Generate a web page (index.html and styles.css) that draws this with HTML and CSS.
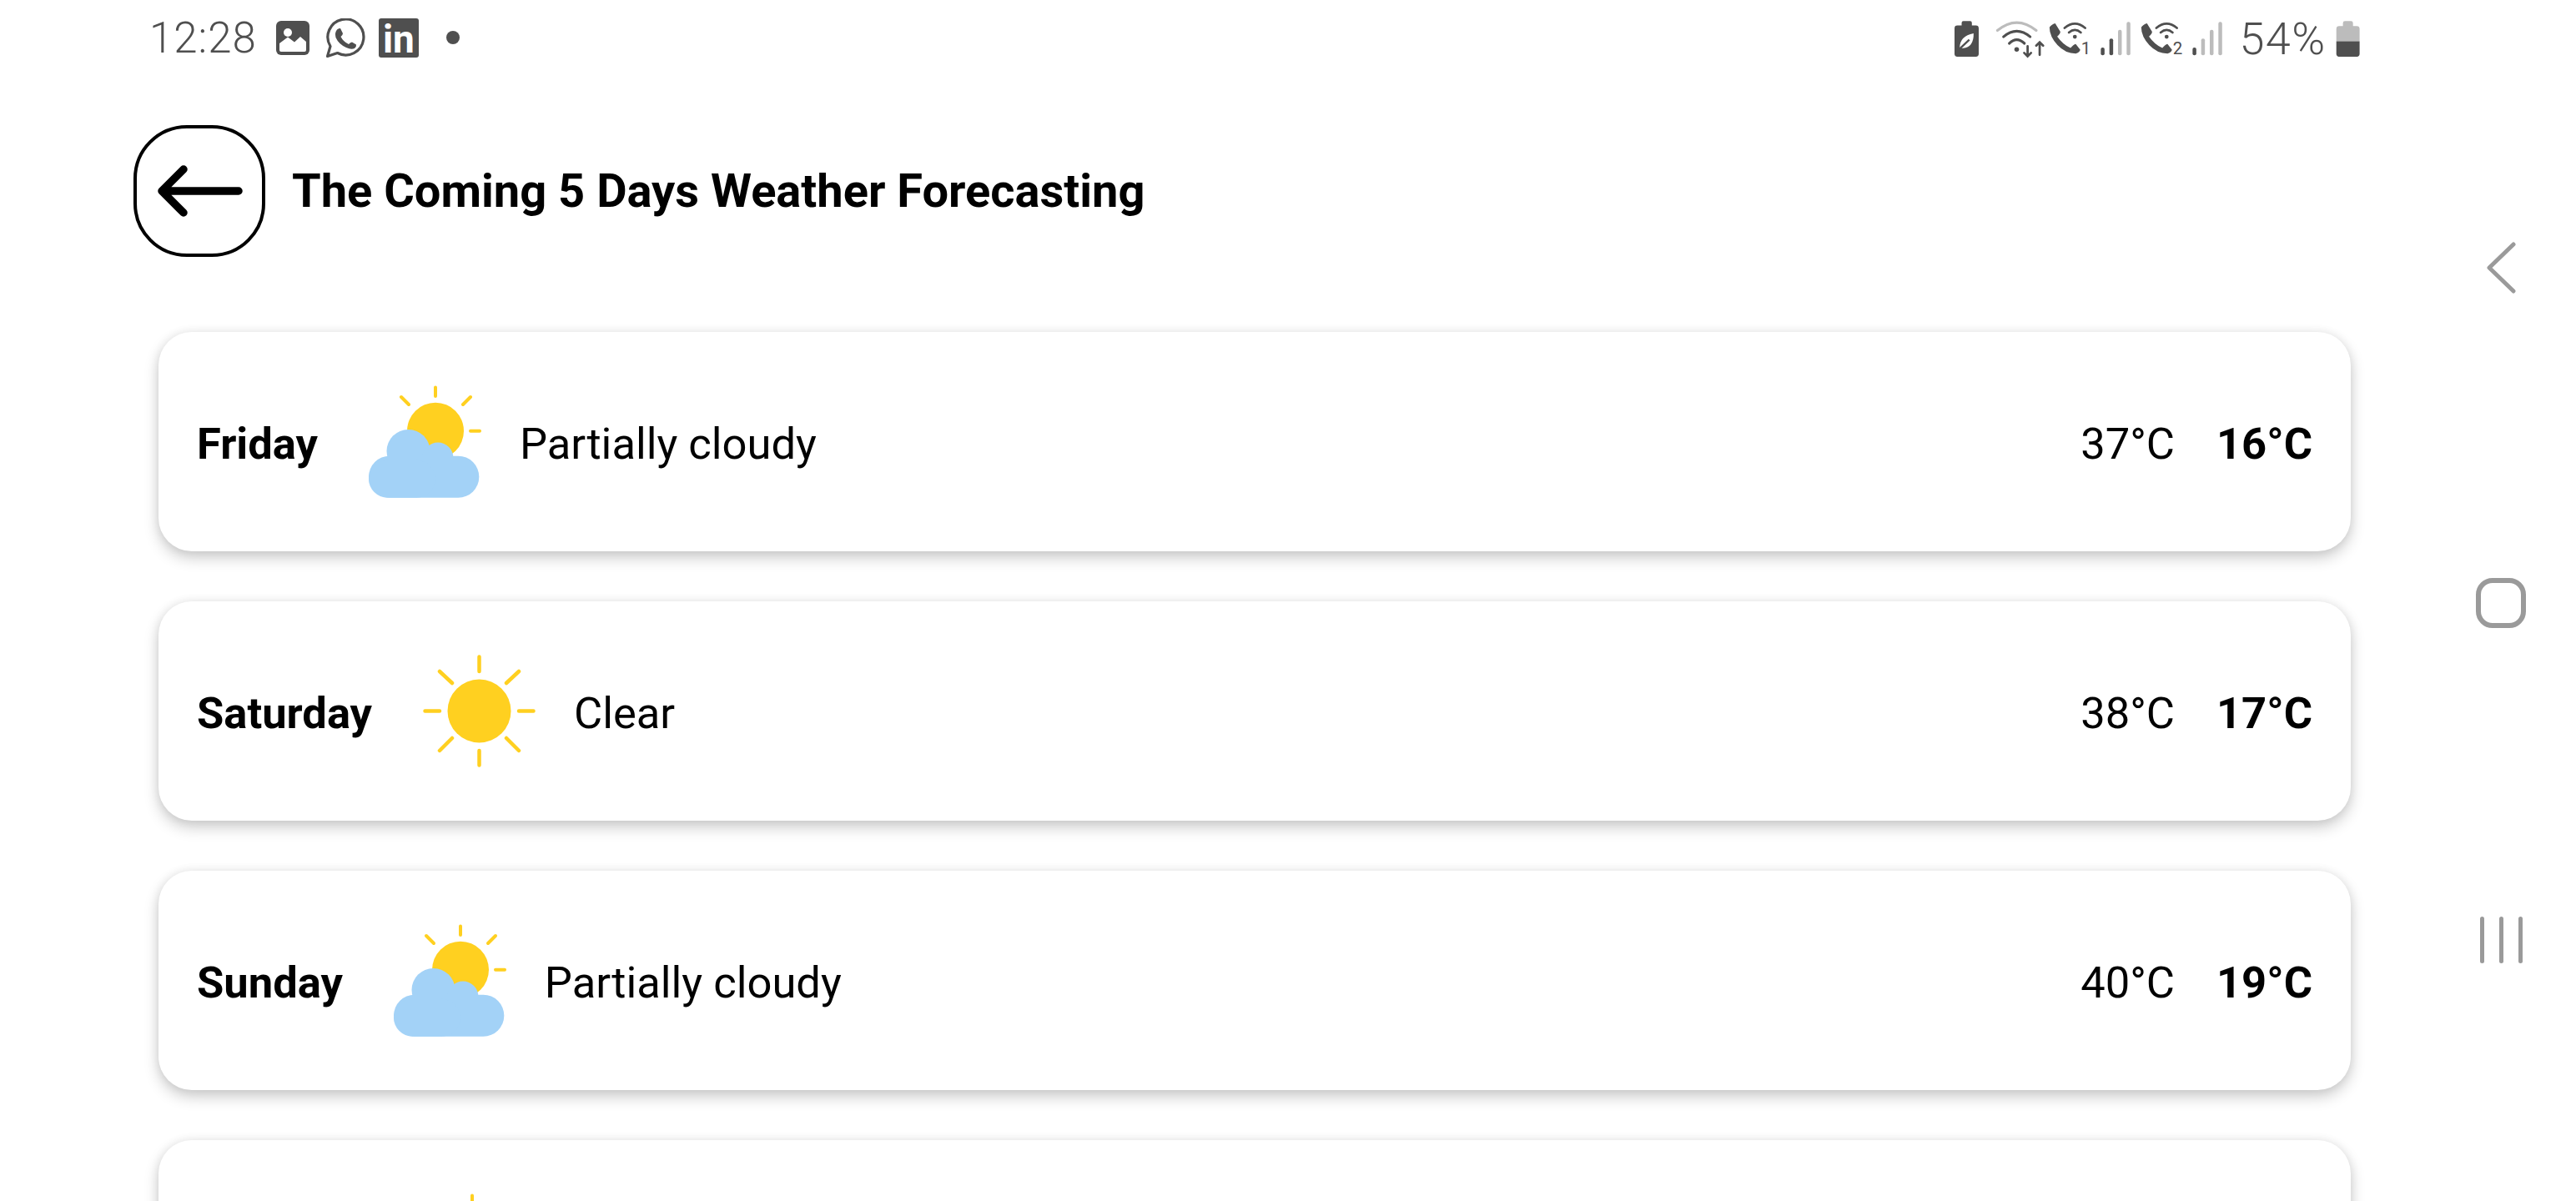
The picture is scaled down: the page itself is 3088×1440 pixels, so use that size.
FILE: index.html

```html
<!DOCTYPE html>
<html lang="en">
<head>
  <meta charset="UTF-8" />
  <meta name="viewport" content="width=device-width, initial-scale=1.0"/>
  <title>Weather Forecasting</title>
  <link rel="stylesheet" href="styles.css">
</head>
<body>
  <svg class="defs" width="0" height="0">
    <defs>
      <g id="partly">
        <circle cx="80" cy="54.7" r="34" fill="#ffd020"/>
        <g stroke="#ffd020" stroke-width="4" stroke-linecap="round">
          <path d="M80 2.5V13M113 23l9-9M48 23l-9-9M122 54.7h11"/>
        </g>
        <g fill="#a3d2f7">
          <circle cx="47.5" cy="79" r="26"/>
          <circle cx="83" cy="87" r="18.5"/>
          <rect x="0" y="84.7" width="132.3" height="50" rx="25"/>
          <rect x="0" y="89.7" width="80" height="45" rx="22.5"/>
        </g>
      </g>
      <g id="clear">
        <circle cx="67.5" cy="67.5" r="38" fill="#ffd020"/>
        <g stroke="#ffd020" stroke-width="4.5" stroke-linecap="round">
          <path d="M67.5 2.5V20M67.5 115V132.5M2.5 67.5H20M115 67.5H132.5M20 20L35 34M100 100L115 115M115 20L100 34M35 100L20 115"/>
        </g>
      </g>
    </defs>
  </svg>

  <div class="app">
    <div class="status">
      <div class="status-left">
        <span class="clock">12:28</span>
        <svg class="ic-img" viewBox="0 0 40 41">
          <rect width="40" height="41" rx="6" fill="#4f4f4f"/>
          <circle cx="14" cy="14" r="5" fill="#fff"/>
          <path d="M4 35V27L14 19.500L22 25.500L29 19L36 25V35Q36 37 34 37H6Q4 37 4 35Z" fill="#fff"/>
        </svg>
        <svg class="ic-wa" viewBox="0 0 47 47">
          <path d="M1.500 45.500L5 33.500A21.500 21.500 0 1 1 13.500 41.500Z" fill="none" stroke="#4f4f4f" stroke-width="3.200" stroke-linejoin="round"/>
          <path d="M13 13.500Q15 11.500 17 12L20 18Q20 20 17.500 22Q20.500 28 27 31Q29 28.500 31 28.500L36 31.500Q36.500 34 34 36Q30 38 24 35Q15 31 11.500 23Q10 17 13 13.500Z" fill="#4f4f4f"/>
        </svg>
        <span class="ic-li">in</span>
        <span class="dot"></span>
      </div>
      <div class="status-right">
        <svg class="ic-bat" viewBox="60 70 85 130">
          <path d="M85 88V79Q85 73 91 73H115Q121 73 121 79V88H135Q145 88 145 98V188Q145 198 135 198H70Q60 198 60 188V98Q60 88 70 88Z" fill="#4f4f4f"/>
          <path d="M78 168Q78 125 127 116Q128 165 90 168Z" fill="#fff"/>
          <path d="M76 172L112 138" stroke="#4f4f4f" stroke-width="7" fill="none"/>
        </svg>
        <svg class="ic-wifi" viewBox="200 66 180 136">
          <g fill="none" stroke-width="9" stroke-linecap="round">
            <path d="M210 105Q277 50 345 105" stroke="#bcbcbc"/>
            <path d="M231 127Q277 88 324 127" stroke="#4f4f4f"/>
            <path d="M251 150Q277 125 304 150" stroke="#4f4f4f"/>
            <path d="M315 160V193M303 183L315 195L327 183M357 190V148M345 158L357 146L369 158" stroke="#4f4f4f" stroke-width="8"/>
          </g>
          <circle cx="277" cy="171" r="8" fill="#4f4f4f"/>
        </svg>
        <svg class="ic-call" viewBox="390 78 150 120">
          <path d="M392 98Q398 88 412 84L430 113Q430 121 419 130Q440 160 466 170Q476 158 484 156L500 177Q497 186 484 190Q448 190 420 160Q392 130 392 98Z" fill="#4f4f4f"/>
          <g fill="none" stroke="#4f4f4f" stroke-width="8" stroke-linecap="round">
            <path d="M445 100Q481 70 517 100"/>
            <path d="M460 116Q481 98 502 116"/>
          </g>
          <circle cx="481" cy="131" r="7" fill="#4f4f4f"/>
          <text x="503" y="191" class="sim">1</text>
        </svg>
        <svg class="ic-sig" viewBox="570 76 106 118">
          <rect x="571" y="166" width="13" height="27" rx="6" fill="#4f4f4f"/>
          <rect x="601" y="135" width="13" height="58" rx="6" fill="#4f4f4f"/>
          <rect x="631" y="104" width="13" height="89" rx="6" fill="#bcbcbc"/>
          <rect x="661" y="77" width="13" height="116" rx="6" fill="#bcbcbc"/>
        </svg>
        <svg class="ic-call ic-call2" viewBox="390 78 150 120">
          <path d="M392 98Q398 88 412 84L430 113Q430 121 419 130Q440 160 466 170Q476 158 484 156L500 177Q497 186 484 190Q448 190 420 160Q392 130 392 98Z" fill="#4f4f4f"/>
          <g fill="none" stroke="#4f4f4f" stroke-width="8" stroke-linecap="round">
            <path d="M445 100Q481 70 517 100"/>
            <path d="M460 116Q481 98 502 116"/>
          </g>
          <circle cx="481" cy="131" r="7" fill="#4f4f4f"/>
          <text x="503" y="191" class="sim">2</text>
        </svg>
        <svg class="ic-sig" viewBox="570 76 106 118">
          <rect x="571" y="166" width="13" height="27" rx="6" fill="#4f4f4f"/>
          <rect x="601" y="135" width="13" height="58" rx="6" fill="#bcbcbc"/>
          <rect x="631" y="104" width="13" height="89" rx="6" fill="#bcbcbc"/>
          <rect x="661" y="77" width="13" height="116" rx="6" fill="#bcbcbc"/>
        </svg>
        <span class="pct">54%</span>
        <svg class="ic-bat2" viewBox="1395 72 85 126">
          <path d="M1420 90V80Q1420 73 1427 73H1448Q1455 73 1455 80V90H1468Q1478 90 1478 100V143H1397V100Q1397 90 1407 90Z" fill="#bcbcbc"/>
          <path d="M1397 143H1478V187Q1478 197 1468 197H1407Q1397 197 1397 187Z" fill="#4f4f4f"/>
        </svg>
      </div>
    </div>

    <div class="header">
      <button class="back">
        <svg width="110" height="64" viewBox="0 0 110 64">
          <path d="M10 32H102M36 6L10 32L36 58" fill="none" stroke="#000" stroke-width="9.500" stroke-linecap="round" stroke-linejoin="round"/>
        </svg>
      </button>
      <h1>The Coming 5 Days Weather Forecasting</h1>
    </div>

    <div class="list">
      <div class="card">
        <span class="day">Friday</span>
        <svg class="icon" viewBox="0 0 135 135"><use href="#partly"/></svg>
        <span class="desc">Partially cloudy</span>
        <div class="temps"><span>37°C</span><b>16°C</b></div>
      </div>
      <div class="card">
        <span class="day">Saturday</span>
        <svg class="icon" viewBox="0 0 135 135"><use href="#clear"/></svg>
        <span class="desc">Clear</span>
        <div class="temps"><span>38°C</span><b>17°C</b></div>
      </div>
      <div class="card">
        <span class="day">Sunday</span>
        <svg class="icon" viewBox="0 0 135 135"><use href="#partly"/></svg>
        <span class="desc">Partially cloudy</span>
        <div class="temps"><span>40°C</span><b>19°C</b></div>
      </div>
      <div class="card">
        <span class="day">Monday</span>
        <svg class="icon" viewBox="0 0 135 135"><use href="#partly"/></svg>
      </div>
    </div>
  </div>

  <div class="nav">
    <svg class="nav-back" viewBox="0 0 36 62">
      <path d="M33 3L4 31L33 59" fill="none" stroke="#9a9a9a" stroke-width="5" stroke-linecap="round" stroke-linejoin="round"/>
    </svg>
    <span class="nav-home"></span>
    <div class="nav-recent"><i></i><i></i><i></i></div>
  </div>
</body>
</html>
```

FILE: styles.css

```css
html, body {
  margin: 0;
  padding: 0;
  height: 1440px;
  overflow: hidden;
  background: #fff;
  font-family: Roboto, sans-serif;
  color: #000;
}
body {
  display: flex;
}
.defs {
  position: absolute;
}
.app {
  width: 2940px;
  flex-shrink: 0;
}

/* status bar */
.status {
  height: 90px;
  padding: 0 111px 0 179px;
  display: flex;
  align-items: center;
  justify-content: space-between;
  color: #4f4f4f;
}
.status-left, .status-right {
  display: flex;
  align-items: center;
}
.status-right {
  padding-top: 3px;
}
.clock {
  font-size: 51px;
  font-weight: 300;
  line-height: 1;
  letter-spacing: 1px;
}
.pct {
  font-size: 54px;
  font-weight: 300;
  line-height: 1;
  letter-spacing: 1.5px;
  margin-left: 20px;
}
.ic-img {
  width: 40px;
  height: 41px;
  margin-left: 23px;
}
.ic-wa {
  width: 47px;
  height: 47px;
  margin-left: 20px;
}
.ic-li {
  width: 48px;
  height: 47px;
  margin-left: 16px;
  background: #4f4f4f;
  border-radius: 3px;
  color: #fff;
  font-size: 46px;
  font-weight: 700;
  line-height: 50px;
  text-align: center;
}
.dot {
  width: 16px;
  height: 16px;
  margin-left: 33px;
  background: #4f4f4f;
  border-radius: 50%;
}
.ic-bat {
  width: 29px;
  height: 45px;
}
.ic-wifi {
  width: 62px;
  height: 47px;
  margin-left: 19px;
}
.ic-call {
  width: 51.6px;
  height: 41px;
  margin-left: 3px;
}
.ic-call2 {
  margin-left: 11.5px;
}
.sim {
  font-family: Roboto, sans-serif;
  font-size: 60px;
  fill: #4f4f4f;
}
.ic-sig {
  width: 36.5px;
  height: 40.6px;
  margin-left: 10.4px;
}
.ic-bat2 {
  width: 29.3px;
  height: 43.4px;
  margin-left: 11px;
}

/* header */
.header {
  display: flex;
  align-items: center;
  gap: 32px;
  padding: 60px 0 0 160px;
}
.back {
  width: 158px;
  height: 158px;
  padding: 0;
  display: flex;
  align-items: center;
  justify-content: center;
  background: #fff;
  border: 4px solid #000;
  border-radius: 64px;
}
h1 {
  margin: 0;
  font-size: 56px;
  font-weight: 700;
}

/* forecast cards */
.list {
  padding: 90px 122px 0 190px;
  display: flex;
  flex-direction: column;
  gap: 60px;
}
.card {
  height: 263px;
  flex-shrink: 0;
  padding: 0 46px;
  display: flex;
  align-items: center;
  background: #fff;
  border-radius: 40px;
  box-shadow: 0 8px 18px rgba(0,0,0,0.2), 0 0 12px rgba(0,0,0,0.07);
  font-size: 52.5px;
}
.day {
  font-weight: 700;
  margin-right: 61px;
  padding-top: 5px;
}
.icon {
  width: 135px;
  height: 135px;
  flex-shrink: 0;
}
.desc {
  margin-left: 46px;
  padding-top: 5px;
}
.temps {
  margin-left: auto;
  display: flex;
  gap: 50px;
  padding-top: 5px;
}

/* android nav buttons */
.nav {
  width: 148px;
  padding: 290px 32px 0 0;
  box-sizing: border-box;
  display: flex;
  flex-direction: column;
  align-items: center;
  gap: 341px;
}
.nav-back {
  width: 36px;
  height: 62px;
}
.nav-home {
  width: 48px;
  height: 48px;
  border: 6px solid #9a9a9a;
  border-radius: 20px;
}
.nav-recent {
  display: flex;
  gap: 18px;
  height: 56px;
  margin-top: 5px;
}
.nav-recent i {
  width: 5px;
  height: 56px;
  background: #9a9a9a;
  border-radius: 3px;
}
```
